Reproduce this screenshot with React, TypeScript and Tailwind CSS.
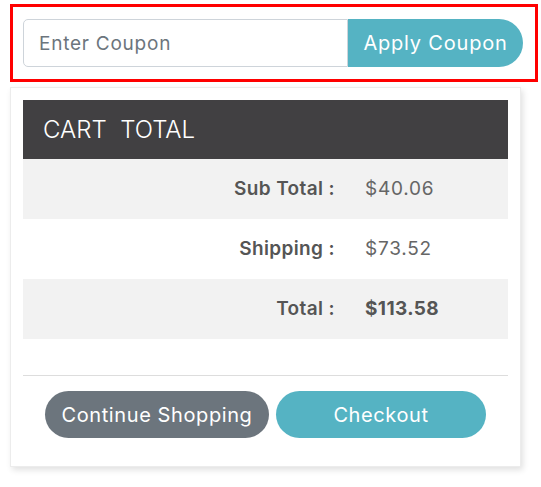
export default function App() {
  return (
    <div className="w-[541px] h-[487px] bg-white pt-[4px] pl-[10px] font-['Inter',sans-serif]">
      <div className="w-[528px] h-[78px] border-[3px] border-[#ff0000] pl-[10px] pt-[12px]">
        <div className="flex h-[48px]">
          <input
            type="text"
            placeholder="Enter Coupon"
            className="w-[325px] h-full border border-[#ced4da] rounded-l-[5px] pl-[15px] pr-[14px] text-[19px] tracking-[0.04em] text-[#495057] placeholder:text-[#6c757d] outline-none"
          />
          <button className="w-[175px] h-full bg-[#55b3c3] rounded-r-full text-white text-[20px] tracking-[0.04em]">
            Apply Coupon
          </button>
        </div>
      </div>

      <div className="mt-[5px] w-[511px] bg-white border border-[#ececec] shadow-[2px_3px_6px_rgba(0,0,0,0.12)] px-[12px] pt-[12px] pb-[12px]">
        <div className="h-[59px] bg-[#414042] flex items-center pl-[20px] text-[24px] font-light text-white whitespace-pre">
          CART  TOTAL
        </div>

        <div className="grid grid-cols-[342px_1fr] h-[60px] items-center bg-[#f2f2f2] text-[19px]">
          <span className="text-right pr-[30px] font-semibold tracking-[0.02em] text-[#555555]">Sub Total :</span>
          <span className="tracking-[0.04em] text-[#666666]">$40.06</span>
        </div>
        <div className="grid grid-cols-[342px_1fr] h-[60px] items-center bg-white text-[19px]">
          <span className="text-right pr-[30px] font-semibold tracking-[0.02em] text-[#555555]">Shipping :</span>
          <span className="tracking-[0.04em] text-[#666666]">$73.52</span>
        </div>
        <div className="grid grid-cols-[342px_1fr] h-[60px] items-center bg-[#f2f2f2] text-[19px]">
          <span className="text-right pr-[30px] font-semibold tracking-[0.02em] text-[#555555]">Total :</span>
          <span className="font-bold tracking-[0.02em] text-[#555555]">$113.58</span>
        </div>

        <div className="mt-[36px] border-t border-[#dddddd] pt-[15px] pb-[16px] flex justify-center gap-[7px]">
          <button className="w-[224px] h-[47px] rounded-full bg-[#6c757d] text-white text-[20px] tracking-[0.03em]">
            Continue Shopping
          </button>
          <button className="w-[210px] h-[47px] rounded-full bg-[#55b3c3] text-white text-[20px] tracking-[0.03em]">
            Checkout
          </button>
        </div>
      </div>
    </div>
  );
}
